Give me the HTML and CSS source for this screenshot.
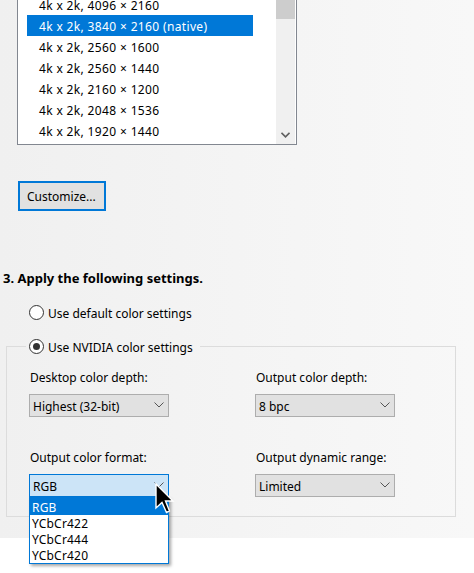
FILE: index.html
```html
<!DOCTYPE html>
<html>
<head>
<meta charset="utf-8">
<link rel="stylesheet" href="styles.css">
</head>
<body>
<div class="panel">
  <div class="listbox">
    <div class="list">
      <div class="row">4k x 2k, 4096 × 2160</div>
      <div class="row selected">4k x 2k, 3840 × 2160 (native)</div>
      <div class="row">4k x 2k, 2560 × 1600</div>
      <div class="row">4k x 2k, 2560 × 1440</div>
      <div class="row">4k x 2k, 2160 × 1200</div>
      <div class="row">4k x 2k, 2048 × 1536</div>
      <div class="row">4k x 2k, 1920 × 1440</div>
    </div>
    <div class="scrollbar">
      <div class="thumb"></div>
      <svg class="sb-arrow" width="9" height="6" viewBox="0 0 9 6"><polyline points="0.5,0.8 4.5,4.8 8.5,0.8" fill="none" stroke="#606060" stroke-width="1.6"/></svg>
    </div>
  </div>

  <button class="btn">Customize...</button>

  <h3 class="heading">3. Apply the following settings.</h3>

  <div class="radio-row">
    <span class="radio"></span>
    <span class="txt">Use default color settings</span>
  </div>

  <fieldset class="group">
    <legend class="legend"><span class="radio checked"></span><span class="txt">Use NVIDIA color settings</span></legend>
    <div class="grid">
      <div class="field">
        <div class="label">Desktop color depth:</div>
        <div class="select"><span class="val">Highest (32-bit)</span><svg class="chev" width="10" height="6" viewBox="0 0 10 6"><polyline points="0.5,0.5 5,5 9.5,0.5" fill="none" stroke="#555" stroke-width="1"/></svg></div>
      </div>
      <div class="field">
        <div class="label">Output color depth:</div>
        <div class="select"><span class="val">8 bpc</span><svg class="chev" width="10" height="6" viewBox="0 0 10 6"><polyline points="0.5,0.5 5,5 9.5,0.5" fill="none" stroke="#555" stroke-width="1"/></svg></div>
      </div>
      <div class="field">
        <div class="label">Output color format:</div>
        <div class="select-wrap">
          <div class="select active"><span class="val">RGB</span><svg class="chev" width="10" height="6" viewBox="0 0 10 6"><polyline points="0.5,0.5 5,5 9.5,0.5" fill="none" stroke="#555" stroke-width="1"/></svg></div>
          <div class="dropdown">
            <div class="opt sel">RGB</div>
            <div class="opt">YCbCr422</div>
            <div class="opt">YCbCr444</div>
            <div class="opt">YCbCr420</div>
          </div>
          <svg class="cursor" width="20" height="32" viewBox="-1 -1 20 32"><polygon points="0,0 0,24 6,18.5 10.5,28.5 13.5,27 9.5,17 17,17" fill="#000" stroke="#fff" stroke-width="1.4" stroke-linejoin="miter"/></svg>
        </div>
      </div>
      <div class="field">
        <div class="label">Output dynamic range:</div>
        <div class="select"><span class="val">Limited</span><svg class="chev" width="10" height="6" viewBox="0 0 10 6"><polyline points="0.5,0.5 5,5 9.5,0.5" fill="none" stroke="#555" stroke-width="1"/></svg></div>
      </div>
    </div>
  </fieldset>
</div>
<div class="below"></div>
</body>
</html>
```

FILE: styles.css
```css
html, body {
  margin: 0;
  padding: 0;
  background: #ffffff;
  overflow: hidden;
}
body {
  font-family: "Noto Sans", "Open Sans", sans-serif;
  font-size: 12px;
  color: #000;
  width: 474px;
  height: 573px;
}
.panel {
  background: linear-gradient(to right, #f0f0f0, #f8f8f8);
  height: 538px;
  display: flex;
  flex-direction: column;
  align-items: flex-start;
}
.listbox {
  margin-top: -8px;
  margin-left: 17px;
  width: 280px;
  height: 153px;
  box-sizing: border-box;
  border: 1px solid #828790;
  background: #fff;
  display: flex;
  overflow: hidden;
}
.list {
  flex: 1;
  padding-top: 1px;
  padding-left: 9px;
  overflow: hidden;
}
.row {
  width: 226px;
  height: 21px;
  line-height: 19px;
  padding-top: 2px;
  padding-left: 12px;
  box-sizing: border-box;
  white-space: nowrap;
  letter-spacing: 0.35px;
}
.row.selected {
  background: #0078d7;
  color: #fff;
}
.scrollbar {
  width: 19px;
  margin-right: 1px;
  background: #f0f0f0;
  display: flex;
  flex-direction: column;
  align-items: center;
}
.thumb {
  width: 19px;
  height: 26px;
  background: #cdcdcd;
}
.sb-arrow {
  margin-top: auto;
  margin-bottom: 6px;
}
.btn {
  margin-top: 36px;
  margin-left: 18px;
  width: 88px;
  height: 30px;
  box-sizing: border-box;
  border: 2px solid #0078d7;
  background: #e1e1e1;
  font-family: inherit;
  font-size: 12px;
  color: #000;
  padding: 1px 0 0 7px;
  text-align: left;
}
.heading {
  margin: 59px 0 0 3px;
  font-size: 13px;
  line-height: 15px;
  padding-top: 1px;
  font-weight: bold;
}
.radio-row {
  margin: 18px 0 0 29px;
  display: flex;
  align-items: center;
  gap: 4px;
  height: 16px;
}
.txt {
  line-height: 15px;
  padding-top: 2px;
}
.radio {
  width: 15px;
  height: 15px;
  box-sizing: border-box;
  border: 1px solid #333;
  border-radius: 50%;
  background: #fff;
  display: inline-flex;
  align-items: center;
  justify-content: center;
}
.radio.checked::after {
  content: "";
  width: 7px;
  height: 7px;
  border-radius: 50%;
  background: #333;
}
.group {
  margin: 18px 0 0 6px;
  width: 450px;
  box-sizing: border-box;
  border: 1px solid #dcdcdc;
  padding: 15px 0 19px 0;
  min-width: 0;
}
.legend {
  margin-left: 19px;
  padding: 0 7px 0 3px;
  display: flex;
  align-items: center;
  gap: 4px;
  height: 16px;
}
.grid {
  margin-left: 22px;
  display: grid;
  grid-template-columns: 226px 140px;
  row-gap: 32px;
}
.field {
  display: flex;
  flex-direction: column;
}
.label {
  padding-left: 1px;
  padding-top: 1px;
  line-height: 15px;
  margin-bottom: 9px;
}
.select-wrap {
  position: relative;
  width: 140px;
}
.select {
  width: 140px;
  height: 23px;
  box-sizing: border-box;
  border: 1px solid #adadad;
  background: #e1e1e1;
  display: flex;
  align-items: center;
  padding-left: 3px;
  padding-right: 4px;
}
.val {
  flex: 1;
  line-height: 15px;
  padding-top: 2px;
}
.select.active {
  background: #cce4f7;
  border-color: #0078d7;
}
.chev {
  display: block;
  margin-bottom: 1px;
}
.dropdown {
  position: absolute;
  left: 0;
  top: 23px;
  width: 140px;
  box-sizing: border-box;
  border: 1px solid #0078d7;
  background: #fff;
  box-shadow: 2px 2px 3px rgba(0, 0, 0, 0.35);
  z-index: 2;
}
.opt {
  height: 16px;
  line-height: 15px;
  padding-top: 1px;
  padding-left: 2px;
  box-sizing: border-box;
  letter-spacing: 0.2px;
}
.opt.sel {
  height: 17px;
  padding-top: 2px;
  background: #0078d7;
  color: #fff;
}
.cursor {
  position: absolute;
  left: 126px;
  top: 9px;
  z-index: 3;
}
.below {
  height: 35px;
  background: #fff;
}
```
